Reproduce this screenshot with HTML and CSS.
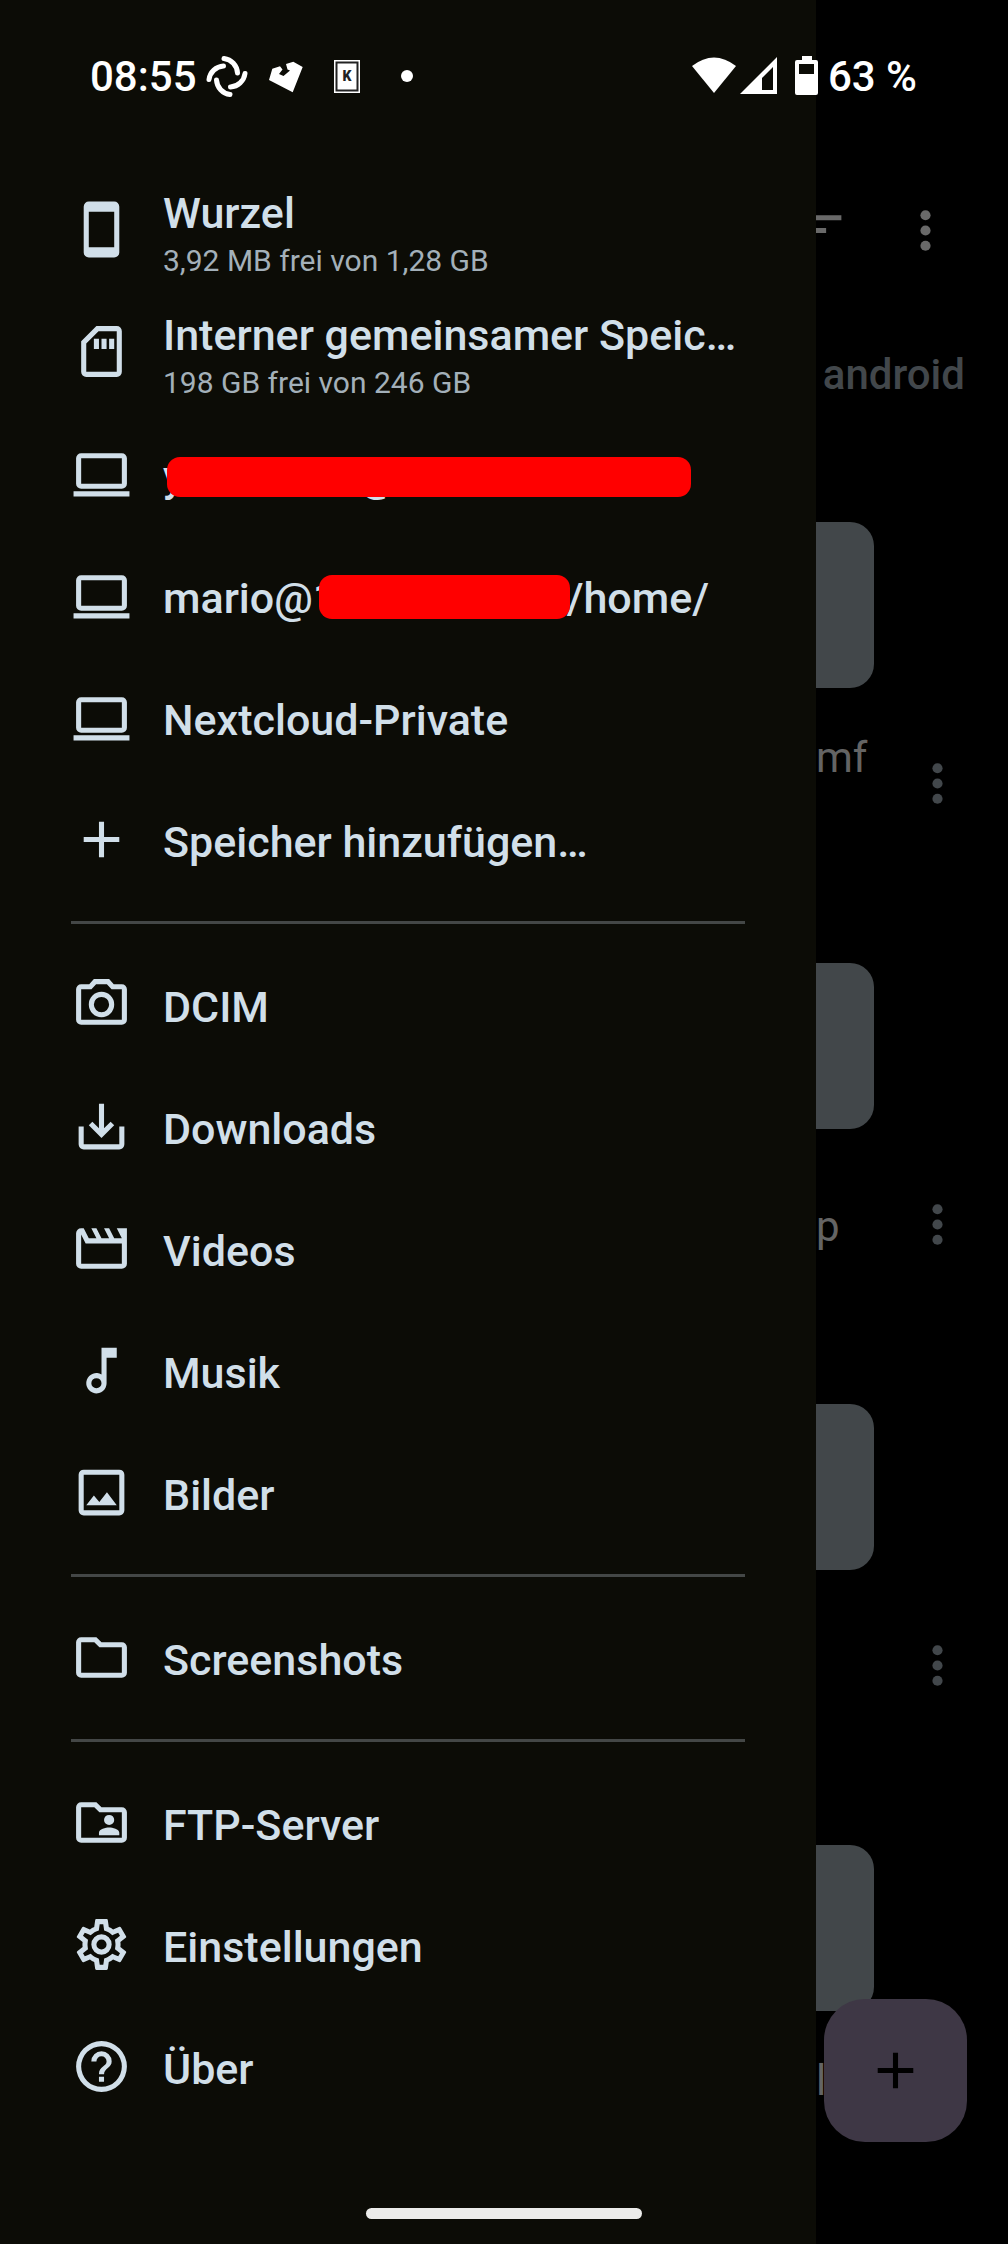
FILE: index.html
```html
<!DOCTYPE html>
<html lang="de">
<head>
<meta charset="utf-8">
<meta name="viewport" content="width=device-width, initial-scale=1">
<title>Dateien</title>
<link rel="stylesheet" href="styles.css">
</head>
<body>
<svg class="sprite" aria-hidden="true">
  <symbol id="laptop" viewBox="0 0 24 24"><path fill-rule="evenodd" d="M4 4h16a2 2 0 0 1 2 2v10a2 2 0 0 1-2 2H4a2 2 0 0 1-2-2V6a2 2 0 0 1 2-2zm0 2v10h16V6zM1 19h22v2H1z"/></symbol>
  <symbol id="plus" viewBox="0 0 24 24"><path d="M19 13h-6v6h-2v-6H5v-2h6V5h2v6h6z"/></symbol>
  <symbol id="more" viewBox="0 0 24 24"><circle cx="12" cy="6" r="2"/><circle cx="12" cy="12" r="2"/><circle cx="12" cy="18" r="2"/></symbol>
</svg>

<header class="status">
  <time class="clock">08:55</time>
  <svg class="notice" viewBox="0 0 60 60" aria-hidden="true"><g fill="none" stroke="#fff" stroke-width="5" stroke-linecap="round"><path id="arm" d="M27 12.500A15.500 15.500 0 0 1 40.500 27"/><use href="#arm" transform="rotate(90 30 30.500)"/><use href="#arm" transform="rotate(180 30 30.500)"/><use href="#arm" transform="rotate(270 30 30.500)"/></g></svg>
  <svg class="notice" viewBox="0 0 60 60" aria-hidden="true"><path d="M36.300 15.700L45.700 21 35.700 46.300 12 34 15.300 22.700 23 20.300 25.500 23.500 22 28 26.500 30 33 24.500 30.500 23.500 29 18z"/></svg>
  <svg class="notice" viewBox="0 0 60 60" aria-hidden="true"><path d="M17 14h26v33H17z"/><path d="M19.500 16.500h21v28h-21z" fill="none" stroke="#222" stroke-width="2"/><text class="card-letter" x="30" y="35" text-anchor="middle">K</text></svg>
  <svg class="notice" viewBox="0 0 60 60" aria-hidden="true"><circle cx="30" cy="30" r="6"/></svg>
  <svg class="system" viewBox="0 0 126 40" aria-hidden="true"><path d="M0 10Q22-7 44 10L22 37z"/><path fill-rule="evenodd" d="M85 1v37H48zM81 11L70 22v12h11z"/><path fill-rule="evenodd" d="M110 0h10v4h4q2 0 2 2v31q0 2-2 2h-19q-2 0-2-2V6q0-2 2-2h5zM107 8v10h15V8z"/></svg>
  <span class="charge">63 %</span>
</header>

<nav class="drawer" aria-label="Navigation">
  <ul class="group">
    <li><a class="row" href="#"><svg class="icon" viewBox="0 0 24 24"><path fill-rule="evenodd" d="M7 1h10a2 2 0 0 1 2 2v18a2 2 0 0 1-2 2H7a2 2 0 0 1-2-2V3a2 2 0 0 1 2-2zm0 4v14h10V5z"/></svg><span class="label"><span class="title">Wurzel</span><span class="detail">3,92 MB frei von 1,28 GB</span></span></a></li>
    <li><a class="row" href="#"><svg class="icon" viewBox="0 0 24 24"><path fill-rule="evenodd" d="M18 2h-8L4 8v12a2 2 0 0 0 2 2h12a2 2 0 0 0 2-2V4a2 2 0 0 0-2-2zm0 18H6V8.830L10.830 4H18zM9 7h2v4H9zm3 0h2v4h-2zm3 0h2v4h-2z"/></svg><span class="label"><span class="title">Interner gemeinsamer Speic…</span><span class="detail">198 GB frei von 246 GB</span></span></a></li>
    <li><a class="row" href="#"><svg class="icon"><use href="#laptop"/></svg><span class="label"><span class="title masked masked-account">y<span class="at">@</span></span></span></a></li>
    <li><a class="row" href="#"><svg class="icon"><use href="#laptop"/></svg><span class="label"><span class="title masked masked-host">mario@1<span class="path">/home/</span></span></span></a></li>
    <li><a class="row" href="#"><svg class="icon"><use href="#laptop"/></svg><span class="label"><span class="title">Nextcloud-Private</span></span></a></li>
    <li><a class="row" href="#"><svg class="icon"><use href="#plus"/></svg><span class="label"><span class="title">Speicher hinzufügen…</span></span></a></li>
  </ul>
  <hr class="divider">
  <ul class="group">
    <li><a class="row" href="#"><svg class="icon" viewBox="0 0 24 24"><path fill-rule="evenodd" d="M20 4h-3.170L15 2H9L7.170 4H4a2 2 0 0 0-2 2v12a2 2 0 0 0 2 2h16a2 2 0 0 0 2-2V6a2 2 0 0 0-2-2zm0 14H4V6h4.050l1.830-2h4.240l1.830 2H20zM12 7a5 5 0 1 0 0 10 5 5 0 0 0 0-10zm0 8a3 3 0 1 1 0-6 3 3 0 0 1 0 6z"/></svg><span class="label"><span class="title">DCIM</span></span></a></li>
    <li><a class="row" href="#"><svg class="icon" viewBox="0 0 24 24"><path d="M19 12v7H5v-7H3v7a2 2 0 0 0 2 2h14a2 2 0 0 0 2-2v-7zM13 12.670l2.590-2.580L17 11.500l-5 5-5-5 1.410-1.410L11 12.670V3h2z"/></svg><span class="label"><span class="title">Downloads</span></span></a></li>
    <li><a class="row" href="#"><svg class="icon" viewBox="0 0 24 24"><path fill-rule="evenodd" d="M4 6.470L5.760 10H20v8H4zM22 4h-4l2 4h-3l-2-4h-2l2 4h-3l-2-4H8l2 4H7L5 4H4a2 2 0 0 0-2 2v12a2 2 0 0 0 2 2h16a2 2 0 0 0 2-2z"/></svg><span class="label"><span class="title">Videos</span></span></a></li>
    <li><a class="row" href="#"><svg class="icon" viewBox="0 0 24 24"><path fill-rule="evenodd" d="M12 3v10.550A4 4 0 1 0 14 17V7h4V3zm-2 16a2 2 0 1 1 0-4 2 2 0 0 1 0 4z"/></svg><span class="label"><span class="title">Musik</span></span></a></li>
    <li><a class="row" href="#"><svg class="icon" viewBox="0 0 24 24"><path fill-rule="evenodd" d="M5 3h14a2 2 0 0 1 2 2v14a2 2 0 0 1-2 2H5a2 2 0 0 1-2-2V5a2 2 0 0 1 2-2zm0 2v14h14V5zM14.140 11.860L11.140 15.730 9 13.140 6 17h12z"/></svg><span class="label"><span class="title">Bilder</span></span></a></li>
  </ul>
  <hr class="divider">
  <ul class="group">
    <li><a class="row" href="#"><svg class="icon" viewBox="0 0 24 24"><path fill-rule="evenodd" d="M9.170 6l2 2H20v10H4V6zM10 4H4a2 2 0 0 0-2 2v12a2 2 0 0 0 2 2h16a2 2 0 0 0 2-2V8a2 2 0 0 0-2-2h-8z"/></svg><span class="label"><span class="title">Screenshots</span></span></a></li>
  </ul>
  <hr class="divider">
  <ul class="group">
    <li><a class="row" href="#"><svg class="icon" viewBox="0 0 24 24"><path fill-rule="evenodd" d="M9.170 6l2 2H20v10H4V6zM10 4H4a2 2 0 0 0-2 2v12a2 2 0 0 0 2 2h16a2 2 0 0 0 2-2V8a2 2 0 0 0-2-2h-8z"/><path d="M15 9a2 2 0 1 0 0 4 2 2 0 0 0 0-4zM11 17h8v-1c0-1.330-2.670-2-4-2s-4 .670-4 2z"/></svg><span class="label"><span class="title">FTP-Server</span></span></a></li>
    <li><a class="row" href="#"><svg class="icon" viewBox="0 0 24 24"><path d="M19.430 12.980c.04-.32.070-.64.070-.98 0-.34-.03-.66-.07-.98l2.110-1.650c.19-.15.240-.42.120-.64l-2-3.460c-.09-.16-.26-.25-.44-.25-.06 0-.12.010-.17.030l-2.490 1c-.52-.4-1.080-.73-1.690-.98l-.38-2.650C14.460 2.180 14.250 2 14 2h-4c-.25 0-.46.180-.49.420l-.38 2.650c-.61.250-1.170.590-1.690.980l-2.490-1c-.06-.02-.12-.03-.18-.03-.17 0-.34.090-.43.250l-2 3.460c-.13.220-.07.490.120.640l2.110 1.650c-.04.320-.07.650-.07.980 0 .33.030.66.070.98l-2.110 1.650c-.19.150-.24.420-.12.640l2 3.460c.09.160.26.250.440.250.06 0 .12-.01.170-.03l2.490-1c.52.400 1.080.730 1.690.980l.38 2.650c.03.240.240.420.490.420h4c.25 0 .46-.18.490-.42l.38-2.650c.61-.25 1.170-.59 1.690-.98l2.490 1c.06.020.12.030.18.030.17 0 .34-.09.430-.25l2-3.460c.12-.22.070-.49-.12-.64l-2.110-1.650zm-1.980-1.710c.04.310.050.520.050.730 0 .21-.02.430-.05.730l-.14 1.130.89.700 1.080.840-.7 1.210-1.270-.51-1.040-.42-.9.680c-.43.320-.84.560-1.250.730l-1.060.430-.16 1.130-.2 1.350h-1.400l-.19-1.350-.16-1.130-1.060-.43c-.43-.18-.83-.41-1.230-.71l-.91-.7-1.060.430-1.270.510-.7-1.210 1.080-.84.890-.7-.14-1.130c-.03-.31-.05-.54-.05-.74s.02-.43.050-.73l.14-1.130-.89-.7-1.080-.84.700-1.210 1.270.510 1.040.420.900-.68c.43-.32.840-.56 1.250-.73l1.060-.43.160-1.130.2-1.350h1.390l.19 1.350.16 1.130 1.060.430c.43.180.830.410 1.230.710l.91.700 1.060-.43 1.270-.51.700 1.210-1.070.850-.89.700.14 1.130zM12 8a4 4 0 1 0 0 8 4 4 0 0 0 0-8zm0 6a2 2 0 1 1 0-4 2 2 0 0 1 0 4z"/></svg><span class="label"><span class="title">Einstellungen</span></span></a></li>
    <li><a class="row" href="#"><svg class="icon" viewBox="0 0 24 24"><path fill-rule="evenodd" d="M11 18h2v-2h-2zm1-16a10 10 0 1 0 0 20 10 10 0 0 0 0-20zm0 18a8 8 0 1 1 0-16 8 8 0 0 1 0 16zM12 6a4 4 0 0 0-4 4h2a2 2 0 1 1 4 0c0 2-3 1.750-3 5h2c0-2.250 3-2.500 3-5a4 4 0 0 0-4-4z"/></svg><span class="label"><span class="title">Über</span></span></a></li>
  </ul>
</nav>

<main class="files">
  <div class="toolbar">
    <button class="tool sort" aria-label="Sortieren"><svg class="icon" viewBox="0 0 24 24"><path d="M3 6h18v2H3zM3 11h12v2H3zM3 16h6v2H3z"/></svg></button>
    <button class="tool" aria-label="Mehr"><svg class="icon"><use href="#more"/></svg></button>
  </div>
  <p class="crumb">android</p>
  <section class="file"><div class="thumb"></div><div class="meta"><span class="name first">mf</span><button class="tool" aria-label="Optionen"><svg class="icon"><use href="#more"/></svg></button></div></section>
  <section class="file"><div class="thumb"></div><div class="meta"><span class="name">p</span><button class="tool" aria-label="Optionen"><svg class="icon"><use href="#more"/></svg></button></div></section>
  <section class="file"><div class="thumb"></div><div class="meta"><span class="name"></span><button class="tool" aria-label="Optionen"><svg class="icon"><use href="#more"/></svg></button></div></section>
  <section class="file"><div class="thumb"></div><div class="meta"><span class="name first">l</span></div></section>
</main>

<button class="fab" aria-label="Hinzufügen"><svg class="icon"><use href="#plus"/></svg></button>
<div class="home"></div>
</body>
</html>
```
FILE: styles.css
```css
* {
  box-sizing: border-box;
}

body {
  position: relative;
  display: grid;
  grid-template-columns: minmax(0, 1fr) 192px;
  min-height: 100vh;
  margin: 0;
  background: #000;
  color: #d1dfe9;
  font-family: Roboto, "Noto Sans", sans-serif;
  font-size: 42px;
}

svg {
  flex: none;
  fill: currentColor;
}

.sprite {
  position: absolute;
  width: 0;
  height: 0;
}

.icon {
  display: block;
  width: 61px;
  height: 61px;
}

/* System bars, drawn over the app */
.status {
  position: absolute;
  inset: 46px 91px auto 90px;
  display: flex;
  align-items: center;
  height: 60px;
  color: #fff;
  font-weight: 500;
}

.clock {
  width: 107px;
}

.notice {
  width: 60px;
  height: 60px;
}

.card-letter {
  fill: #222;
  font-size: 14px;
  font-weight: 900;
}

.system {
  width: 126px;
  height: 40px;
  margin-left: auto;
}

.charge {
  margin-left: 10px;
}

.home {
  position: absolute;
  bottom: 25px;
  left: 50%;
  width: 276px;
  height: 11px;
  margin-left: -138px;
  border-radius: 6px;
  background: #ececea;
}

/* Navigation drawer */
.drawer {
  padding: 168px 71px 112px;
  background: #0c0c06;
}

.group {
  margin: 0;
  padding: 0;
  list-style: none;
}

.row {
  display: flex;
  align-items: center;
  gap: 31px;
  height: 122px;
  padding-top: 1px;
  color: inherit;
  text-decoration: none;
}

.label {
  display: flex;
  flex-direction: column;
  padding-top: 4px;
  white-space: nowrap;
}

.title {
  font-size: 43px;
  font-weight: 500;
  line-height: 58px;
}

.detail {
  color: #a3b0b9;
  font-size: 30px;
  line-height: 38px;
}

.divider {
  height: 3px;
  margin: 21px 0 19px;
  border: 0;
  background: #444746;
}

/* Names hidden by a red bar */
.masked {
  position: relative;
  display: flex;
}

.masked::after {
  content: "";
  position: absolute;
  border-radius: 13px;
  background: #f00;
}

.masked-account {
  justify-content: space-between;
  width: 234px;
}

.masked-account::after {
  top: 10px;
  left: 4px;
  width: 524px;
  height: 40px;
}

.masked-host {
  justify-content: space-between;
  width: 546px;
}

.masked-host::after {
  top: 6px;
  left: 156px;
  width: 251px;
  height: 44px;
}

/* File list behind the drawer */
.files {
  display: flex;
  flex-direction: column;
  overflow: hidden;
  color: #42474b;
}

.tool,
.fab {
  padding: 0;
  border: 0;
  background: none;
  color: inherit;
}

.toolbar {
  display: flex;
  justify-content: space-between;
  padding: 200px 52px 0 0;
  color: #696969;
}

.sort {
  margin-left: -28px;
}

.crumb {
  margin: 88px 43px 0 0;
  font-weight: 500;
  line-height: 52px;
  text-align: right;
}

.file {
  padding-bottom: 85px;
}

.file:last-child {
  padding-bottom: 0;
}

.crumb + .file {
  margin-top: 121px;
}

.thumb {
  width: 58px;
  height: 166px;
  border-radius: 0 24px 24px 0;
  background: #42474a;
}

.meta {
  display: flex;
  align-items: center;
  justify-content: space-between;
  height: 190px;
  padding-right: 40px;
}

.name {
  padding-top: 5px;
  color: #646464;
  line-height: 56px;
}

.first {
  padding-bottom: 56px;
}

.fab {
  position: absolute;
  right: 41px;
  bottom: 102px;
  display: grid;
  place-items: center;
  width: 143px;
  height: 143px;
  border-radius: 41px;
  background: #3e3745;
  color: #000;
}
```
